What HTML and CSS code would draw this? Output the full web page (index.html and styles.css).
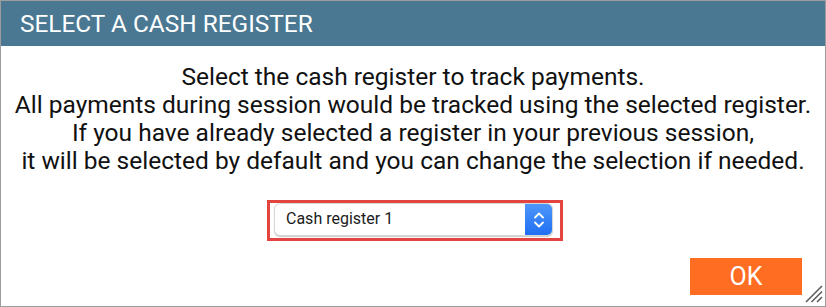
FILE: index.html
```html
<!DOCTYPE html>
<html lang="en">
<head>
<meta charset="utf-8">
<title>Select a cash register</title>
<link rel="stylesheet" href="styles.css">
</head>
<body>
<div class="dialog">
  <div class="header">SELECT A CASH REGISTER</div>
  <div class="content">
    <p class="message">Select the cash register to track payments.<br>All payments during session would be tracked using the selected register.<br>If you have already selected a register in your previous session,<br>it will be selected by default and you can change the selection if needed.</p>
    <div class="highlight">
      <div class="select">
        <span class="select-value">Cash register 1</span>
        <span class="stepper">
          <svg width="12" height="20" viewBox="0 0 12 20" fill="none" stroke="#fff" stroke-width="1.8" stroke-linecap="round" stroke-linejoin="round"><path d="M2 7.5 L6 3.5 L10 7.5"/><path d="M2 12.5 L6 16.5 L10 12.5"/></svg>
        </span>
      </div>
    </div>
    <div class="actions">
      <button class="ok">OK</button>
    </div>
  </div>
  <svg class="grip" width="20" height="20" viewBox="0 0 20 20" stroke="#5f5f5f" stroke-width="1.6"><path d="M19 3 L3 19 M19 8.5 L8.5 19 M19 14 L14 19"/></svg>
</div>
</body>
</html>
```

FILE: styles.css
```css
html, body {
  margin: 0;
  padding: 0;
  background: #fff;
}
.dialog {
  position: relative;
  width: 826px;
  height: 307px;
  box-sizing: border-box;
  border: 1px solid #9c9c9c;
  display: flex;
  flex-direction: column;
  font-family: Roboto, "Liberation Sans", Arial, sans-serif;
  overflow: hidden;
}
.header {
  height: 45px;
  flex: none;
  background: #4a7892;
  color: #fff;
  font-size: 24.4px;
  line-height: 45px;
  padding-left: 19px;
}
.content {
  flex: 1;
  display: flex;
  flex-direction: column;
  align-items: center;
}
.message {
  margin: 17px 0 0;
  text-align: center;
  font-size: 24.5px;
  line-height: 28px;
  color: #111;
  white-space: nowrap;
}
.highlight {
  margin-top: 25px;
  margin-left: 4px;
  width: 296px;
  height: 41px;
  box-sizing: border-box;
  border: 3px solid #e2443f;
  padding: 1px 8px 3px 5px;
}
.select {
  height: 31px;
  box-sizing: border-box;
  display: flex;
  align-items: stretch;
  border-radius: 5px;
  background: #fff;
  box-shadow: 0 0 0 1px #d8d8d8, 0 1px 1px 1px #c9c9c9;
  overflow: hidden;
}
.select-value {
  flex: 1;
  font-size: 16px;
  line-height: 29px;
  color: #1b1b1b;
  padding-left: 11px;
}
.stepper {
  width: 27px;
  display: flex;
  align-items: center;
  justify-content: center;
  background: linear-gradient(#4d97fa, #1f6ff3);
}
.actions {
  align-self: stretch;
  display: flex;
  justify-content: flex-end;
  margin-top: 17px;
  padding-right: 23px;
}
.ok {
  width: 112px;
  height: 37px;
  border: none;
  background: #ff6d22;
  color: #fff;
  font-family: Roboto, "Liberation Sans", Arial, sans-serif;
  font-size: 25px;
  padding: 0;
}
.grip {
  position: absolute;
  right: 2px;
  bottom: 3px;
}
```
